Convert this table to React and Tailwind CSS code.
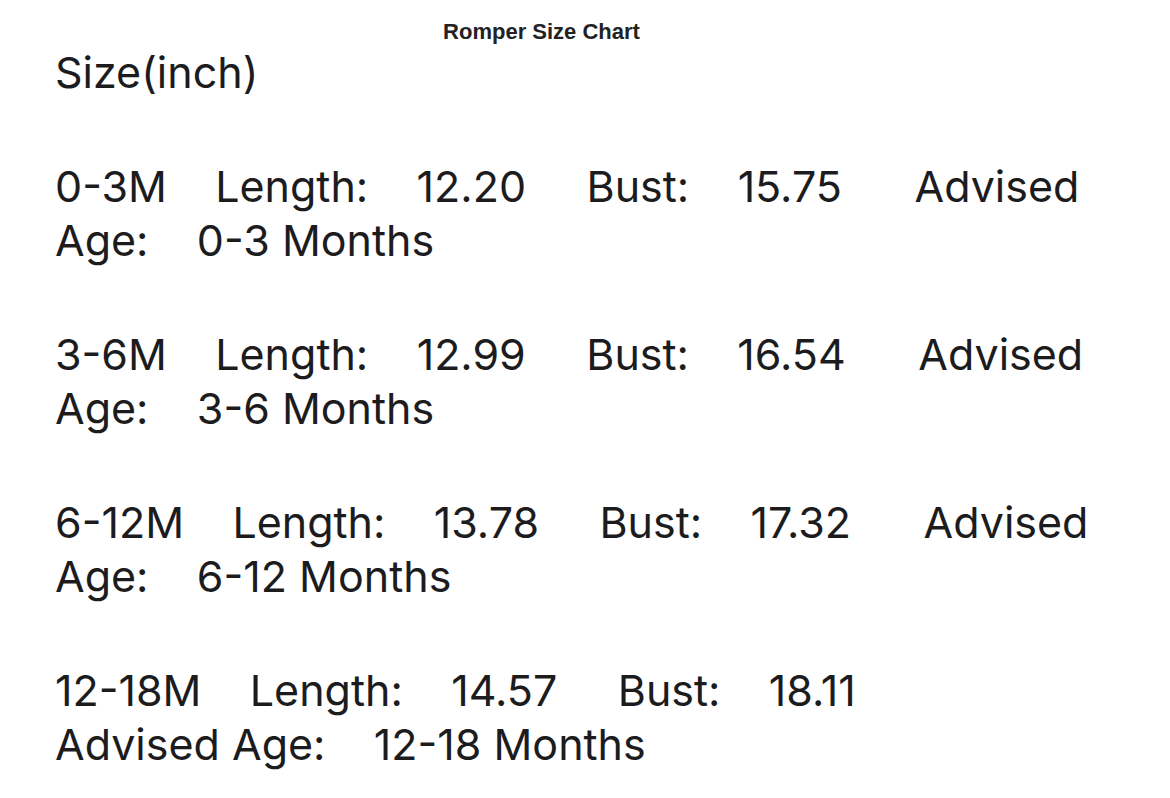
import React from "react";

const rows = [
  { line1: "0-3M    Length:    12.20     Bust:    15.75      Advised", line2: "Age:    0-3 Months" },
  { line1: "3-6M    Length:    12.99     Bust:    16.54      Advised", line2: "Age:    3-6 Months" },
  { line1: "6-12M    Length:    13.78     Bust:    17.32      Advised", line2: "Age:    6-12 Months" },
  { line1: "12-18M    Length:    14.57     Bust:    18.11", line2: "Advised Age:    12-18 Months" },
];

const App = () => {
  return (
    <div className="min-h-screen bg-white text-[#1c1c1e]">
      <div className="w-[1083px] pt-[18px] text-center font-['Liberation_Sans',Arial,sans-serif] text-[22px] font-bold leading-[27px] text-[#222]">
        Romper Size Chart
      </div>
      <div className="pl-[55px] font-['Inter',sans-serif] text-[43px] leading-[54px] whitespace-pre">
        <div>Size(inch)</div>
        {rows.map((r) => (
          <div key={r.line2} className="mt-[60px]">
            <div>{r.line1}</div>
            <div>{r.line2}</div>
          </div>
        ))}
      </div>
    </div>
  );
};

export default App;
